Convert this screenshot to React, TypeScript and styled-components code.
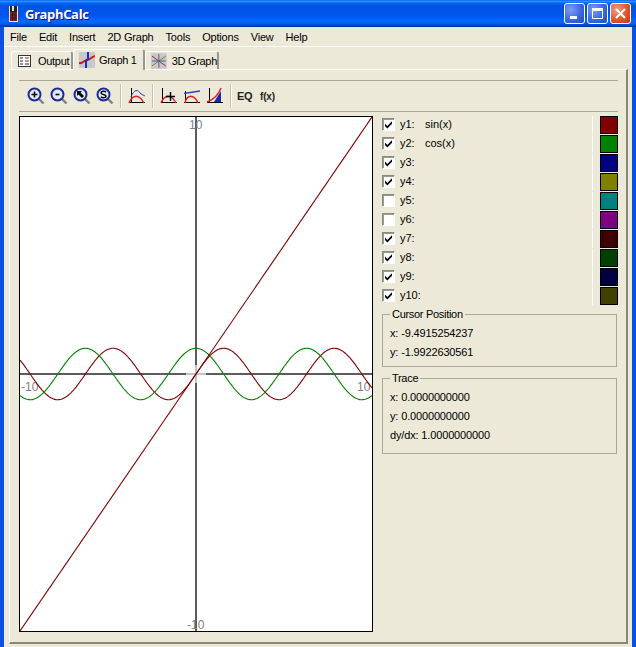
import React from 'react';
import styled, { createGlobalStyle } from 'styled-components';

const GlobalStyle = createGlobalStyle`
    html, body {
        margin: 0;
        padding: 0;
        background: #ece9d8;
    }
    * {
        box-sizing: border-box;
    }
`;

const Window = styled.div`
    width: 636px;
    height: 647px;
    display: flex;
    flex-direction: column;
    overflow: hidden;
    font-family: "Liberation Sans", Arial, sans-serif;
    font-size: 11px;
    color: #000;
`;

const TitleBar = styled.div`
    height: 27px;
    flex: none;
    display: flex;
    align-items: center;
    padding: 0 5px 0 9px;
    background: linear-gradient(180deg, #0058ee 0%, #3593ff 4%, #288eff 6%, #127dff 8%, #036ffc 10%, #0262ee 14%, #0057e5 20%, #0054e3 24%, #0055eb 56%, #005bf5 66%, #026afe 76%, #0062ef 86%, #0052d6 92%, #0040ab 96%, #003092 100%);
`;

const TitleText = styled.span`
    margin-left: 7px;
    flex: 1;
    color: #fff;
    font-family: "Open Sans", sans-serif;
    font-size: 13px;
    font-weight: 700;
    letter-spacing: -0.35px;
    text-shadow: 1px 1px 0 #0f1089;
`;

const CaptionButton = styled.button<{ $close?: boolean }>`
    width: 21px;
    height: 21px;
    margin-left: 2px;
    padding: 0;
    display: flex;
    align-items: center;
    justify-content: center;
    border: 1px solid #fff;
    border-radius: 3px;
    background: ${p => p.$close
        ? 'radial-gradient(circle at 30% 30%, #f0a080, #e0562c 55%, #c23a12)'
        : 'radial-gradient(circle at 30% 30%, #7f9ef0, #3a68e0 55%, #2148c8)'};

    svg {
        display: block;
    }
`;

const Body = styled.div`
    flex: 1;
    min-height: 0;
    display: flex;
    flex-direction: column;
    background: #ece9d8;
    border-left: 4px solid #0c50e0;
    border-right: 4px solid #0c50e0;
`;

const MenuBar = styled.div`
    height: 20px;
    flex: none;
    display: flex;
    align-items: center;
    padding-left: 6px;
    gap: 12px;
    border-bottom: 1px solid #fff;
    letter-spacing: -0.2px;
`;

const MenuItem = styled.span`
    line-height: 16px;
`;

const TabStrip = styled.div`
    height: 23px;
    flex: none;
    display: flex;
    align-items: flex-end;
    padding-left: 7px;
`;

const Tab = styled.div<{ $active?: boolean; $width: number }>`
    position: relative;
    z-index: ${p => (p.$active ? 2 : 0)};
    width: ${p => p.$width}px;
    height: ${p => (p.$active ? 21 : 18)}px;
    margin-bottom: ${p => (p.$active ? 0 : 1)}px;
    display: flex;
    align-items: center;
    gap: ${p => (p.$active ? 4 : 5)}px;
    padding-left: 5px;
    padding-bottom: ${p => (p.$active ? 1 : 0)}px;
    white-space: nowrap;
    letter-spacing: -0.3px;
    background: #ece9d8;
    border-top: 1px solid #fff;
    border-left: 1px solid #fff;
    border-right: 2px solid #9a978a;
    border-radius: 3px 3px 0 0;
`;

const TabPage = styled.div`
    flex: 1;
    min-height: 0;
    margin: -1px 4px 3px 5px;
    padding: 10px 8px 0 9px;
    display: flex;
    flex-direction: column;
    border-top: 1px solid #fff;
    border-left: 1px solid #fff;
    border-right: 2px solid #8a8778;
    border-bottom: 2px solid #8a8778;
`;

const Toolbar = styled.div`
    height: 32px;
    flex: none;
    display: flex;
    align-items: center;
    padding-left: 5px;
    border-top: 1px solid #aca899;
    border-bottom: 1px solid #aca899;
`;

const ToolButton = styled.div<{ $small?: boolean }>`
    width: 23px;
    height: 23px;
    display: flex;
    align-items: center;
    justify-content: center;
    font-weight: 700;
    font-size: ${p => (p.$small ? 10 : 11)}px;
    letter-spacing: ${p => (p.$small ? -0.2 : -0.5)}px;
    color: #222;
`;

const ToolSeparator = styled.div<{ $tight?: boolean }>`
    width: 1px;
    height: 24px;
    margin: 0 ${p => (p.$tight ? 2 : 4)}px 0 4px;
    background: #c4c1b0;
    box-shadow: 1px 0 0 #fff;
`;

const Content = styled.div`
    display: flex;
    gap: 9px;
    margin-top: 4px;
`;

const GraphBox = styled.div`
    width: 354px;
    height: 516px;
    flex: none;
    border: 1px solid #000;
    background: #fff;

    svg {
        display: block;
    }
`;

const SidePanel = styled.div`
    flex: 1;
    min-width: 0;
    display: flex;
    flex-direction: column;
`;

const FunctionRow = styled.div`
    height: 19px;
    display: flex;
    align-items: flex-start;
`;

const CheckBox = styled.div`
    width: 13px;
    height: 13px;
    margin-top: 2px;
    border: 1px solid #fff;
    border-top-color: #8a8a80;
    border-left-color: #8a8a80;
    background: #fff;
    box-shadow: inset 1px 1px 0 #9a9a90;

    svg {
        display: block;
    }
`;

const FunctionName = styled.span`
    width: 25px;
    margin-left: 5px;
    line-height: 17px;
`;

const Expression = styled.span`
    flex: 1;
    height: 18px;
    line-height: 17px;
    border-right: 1px solid #fff;
`;

const Swatch = styled.div<{ $color: string }>`
    width: 18px;
    height: 18px;
    margin-left: 7px;
    border: 1px solid #000;
    background: ${p => p.$color};
`;

const Group = styled.fieldset<{ $top: number; $bottom: number }>`
    margin: ${p => p.$top}px 1px 0 0;
    padding: 3px 0 ${p => p.$bottom}px 7px;
    border: 1px solid #aca899;
    min-width: 0;

    legend {
        margin-left: 0;
        padding: 0 2px;
        line-height: 13px;
        letter-spacing: -0.3px;
    }
`;

const ReadOut = styled.div`
    line-height: 19px;
    letter-spacing: -0.15px;
`;

const W = 352;
const H = 514;
const CX = 176;
const CY = 257;
const SX = W / 20;
const SY = H / 20;

function curve(fn: (x: number) => number) {
    const pts: string[] = [];
    for (let px = 0; px <= W; px++) {
        const x = (px - CX) / SX;
        pts.push(`${px},${(CY - fn(x) * SY).toFixed(1)}`);
    }
    return pts.join(' ');
}

const AXIS_LABEL = { fill: '#808080', fontSize: 12, fontFamily: '"Liberation Sans", sans-serif' };

const Plot = () => (
    <svg width={W} height={H} viewBox={`0 0 ${W} ${H}`}>
        <rect x={CX - 1} y={0} width={2} height={H} fill="#5c5c5c" />
        <rect x={0} y={CY - 1} width={W} height={2} fill="#5c5c5c" />
        <rect x={CX - 10} y={CY - 1} width={20} height={2} fill="#c4c4c4" />
        <rect x={CX - 1} y={CY - 9} width={2} height={18} fill="#c4c4c4" />
        <text x={CX - 7} y={12} {...AXIS_LABEL}>10</text>
        <text x={1} y={274} {...AXIS_LABEL}>-10</text>
        <text x={337} y={274} {...AXIS_LABEL}>10</text>
        <text x={CX - 9} y={512} {...AXIS_LABEL}>-10</text>
        <g fill="none" strokeWidth={1.1}>
            <polyline points={curve(Math.sin)} stroke="#800000" />
            <polyline points={curve(Math.cos)} stroke="#008000" />
            <line x1={0} y1={H} x2={W} y2={0} stroke="#800000" />
        </g>
    </svg>
);

const AppIcon = () => (
    <svg width="9" height="16" viewBox="0 0 9 16">
        <rect width="9" height="16" fill="#e8e4d8" />
        <rect x="1" y="0" width="7" height="15" fill="#222" />
        <rect x="3" y="0" width="2" height="5" fill="#ddd" />
        <rect x="1" y="6" width="7" height="9" fill="#a01818" />
        <path d="M1 9h7M1 12h7M3.5 6v9M6 6v9" stroke="#222" strokeWidth="1" />
    </svg>
);

const OutputIcon = () => (
    <svg width="16" height="16" viewBox="0 0 16 16">
        <rect x="1.5" y="2.5" width="12" height="11" fill="#fff" stroke="#333" />
        <path d="M3 5h3M3 8h3M3 11h3" stroke="#222" />
        <path d="M8 5h4M8 8h4" stroke="#a02020" />
        <path d="M8 11h4" stroke="#222" />
    </svg>
);

const GraphTabIcon = () => (
    <svg width="16" height="16" viewBox="0 0 16 16">
        <rect width="16" height="16" fill="#c8c8c8" />
        <path d="M0 11C4 12 5 8 8 8S12 5 16 4" fill="none" stroke="#d01818" strokeWidth="2" />
        <path d="M9 0V7L7 9V16" fill="none" stroke="#1030c8" strokeWidth="2" />
    </svg>
);

const ThreeDTabIcon = () => (
    <svg width="16" height="16" viewBox="0 0 16 16">
        <rect width="16" height="16" fill="#c8c8c8" />
        <path d="M8 1V15" stroke="#606080" />
        <path d="M1 3L15 13" stroke="#a02040" />
        <path d="M1 13L15 3" stroke="#808020" />
        <path d="M1 8H15" stroke="#4060a0" />
    </svg>
);

const Magnifier = ({ children }: { children: React.ReactNode }) => (
    <svg width="18" height="18" viewBox="0 0 18 18">
        <path d="M11.5 11.5L16.5 16.5" stroke="#808080" strokeWidth="2.4" />
        <circle cx="7.5" cy="7.5" r="6" fill="#e4e8f8" stroke="#1a2a96" strokeWidth="2" />
        {children}
    </svg>
);

const GraphTool = ({ children }: { children: React.ReactNode }) => (
    <svg width="18" height="18" viewBox="0 0 18 18" fill="none">
        {children}
    </svg>
);

const Check = () => (
    <svg width="11" height="11" viewBox="0 0 11 11">
        <path d="M2 4.5L4.3 7L9 2.2V4.7L4.3 9.4L2 7Z" fill="#000" />
    </svg>
);

const functions = [
    { name: 'y1:', expr: 'sin(x)', on: true, color: '#800000' },
    { name: 'y2:', expr: 'cos(x)', on: true, color: '#008000' },
    { name: 'y3:', expr: '', on: true, color: '#000080' },
    { name: 'y4:', expr: '', on: true, color: '#808000' },
    { name: 'y5:', expr: '', on: false, color: '#008080' },
    { name: 'y6:', expr: '', on: false, color: '#800080' },
    { name: 'y7:', expr: '', on: true, color: '#400000' },
    { name: 'y8:', expr: '', on: true, color: '#004000' },
    { name: 'y9:', expr: '', on: true, color: '#000040' },
    { name: 'y10:', expr: '', on: true, color: '#404000' },
];

const menus = ['File', 'Edit', 'Insert', '2D Graph', 'Tools', 'Options', 'View', 'Help'];

const App: React.FC = () => {
    return (
        <Window>
            <GlobalStyle />
            <TitleBar>
                <AppIcon />
                <TitleText>GraphCalc</TitleText>
                <CaptionButton>
                    <svg width="13" height="13" viewBox="0 0 13 13"><rect x="2" y="9" width="7" height="3" fill="#fff" /></svg>
                </CaptionButton>
                <CaptionButton>
                    <svg width="13" height="13" viewBox="0 0 13 13"><path d="M1.5 3.5h10v8h-10zM1 2.5h11" fill="none" stroke="#fff" strokeWidth="1" /><rect x="1" y="1" width="11" height="2" fill="#fff" /></svg>
                </CaptionButton>
                <CaptionButton $close>
                    <svg width="13" height="13" viewBox="0 0 13 13"><path d="M2 2L11 11M11 2L2 11" stroke="#fff" strokeWidth="2" /></svg>
                </CaptionButton>
            </TitleBar>
            <Body>
                <MenuBar>
                    {menus.map(m => <MenuItem key={m}>{m}</MenuItem>)}
                </MenuBar>
                <TabStrip>
                    <Tab $width={62}><OutputIcon />Output</Tab>
                    <Tab $active $width={72}><GraphTabIcon />Graph 1</Tab>
                    <Tab $width={74}><ThreeDTabIcon />3D Graph</Tab>
                </TabStrip>
                <TabPage>
                    <Toolbar>
                        <ToolButton><Magnifier><path d="M4.5 7.5h6M7.5 4.5v6" stroke="#000" strokeWidth="1.6" /></Magnifier></ToolButton>
                        <ToolButton><Magnifier><path d="M5.5 7.5h4" stroke="#000" strokeWidth="1.6" /></Magnifier></ToolButton>
                        <ToolButton><Magnifier><path d="M4 4h5L7.5 5.5L11 9L9 11L5.5 7.5L4 9Z" fill="#000" /></Magnifier></ToolButton>
                        <ToolButton><Magnifier><path d="M10 5.2C9 3.8 5 4 5 6C5 8 10 7 10 9.2C10 11 6 11.2 5 9.8" fill="none" stroke="#000" strokeWidth="1.5" /></Magnifier></ToolButton>
                        <ToolSeparator />
                        <ToolButton>
                            <GraphTool>
                                <path d="M3.5 1V16M1 15.5H17" stroke="#000" />
                                <path d="M3 10C6 2 10 2 13 7L17 9" stroke="#3040c0" />
                                <path d="M1 16C5 7 11 7 16 16" stroke="#e02020" strokeWidth="1.4" />
                            </GraphTool>
                        </ToolButton>
                        <ToolSeparator />
                        <ToolButton>
                            <GraphTool>
                                <path d="M2.5 1V16M1 15.5H17" stroke="#000" />
                                <path d="M1 16C5 7 11 7 16 16" stroke="#e02020" strokeWidth="1.4" />
                                <path d="M6 9.5H15M10.5 5V14" stroke="#000" strokeWidth="1.4" />
                            </GraphTool>
                        </ToolButton>
                        <ToolButton>
                            <GraphTool>
                                <path d="M2.5 4V16M1 15.5H17" stroke="#000" />
                                <path d="M2 16C4 7 11 7 15 16" stroke="#e02020" strokeWidth="1.4" />
                                <path d="M1 6.5L17 4" stroke="#3040c0" strokeWidth="1.4" />
                            </GraphTool>
                        </ToolButton>
                        <ToolButton>
                            <GraphTool>
                                <path d="M8 15L15 4V15Z" fill="#1828b0" />
                                <path d="M3.5 1V16M1 15.5H17" stroke="#000" />
                                <path d="M1 15C7 13 12 9 15 1" stroke="#e02020" strokeWidth="1.4" />
                            </GraphTool>
                        </ToolButton>
                        <ToolSeparator $tight />
                        <ToolButton>EQ</ToolButton>
                        <ToolButton $small>f(x)</ToolButton>
                    </Toolbar>
                    <Content>
                        <GraphBox><Plot /></GraphBox>
                        <SidePanel>
                            {functions.map(f => (
                                <FunctionRow key={f.name}>
                                    <CheckBox>{f.on && <Check />}</CheckBox>
                                    <FunctionName>{f.name}</FunctionName>
                                    <Expression>{f.expr}</Expression>
                                    <Swatch $color={f.color} />
                                </FunctionRow>
                            ))}
                            <Group $top={2} $bottom={4}>
                                <legend>Cursor Position</legend>
                                <ReadOut>x: -9.4915254237</ReadOut>
                                <ReadOut>y: -1.9922630561</ReadOut>
                            </Group>
                            <Group $top={5} $bottom={8}>
                                <legend>Trace</legend>
                                <ReadOut>x: 0.0000000000</ReadOut>
                                <ReadOut>y: 0.0000000000</ReadOut>
                                <ReadOut>dy/dx: 1.0000000000</ReadOut>
                            </Group>
                        </SidePanel>
                    </Content>
                </TabPage>
            </Body>
        </Window>
    );
};

export default App;
